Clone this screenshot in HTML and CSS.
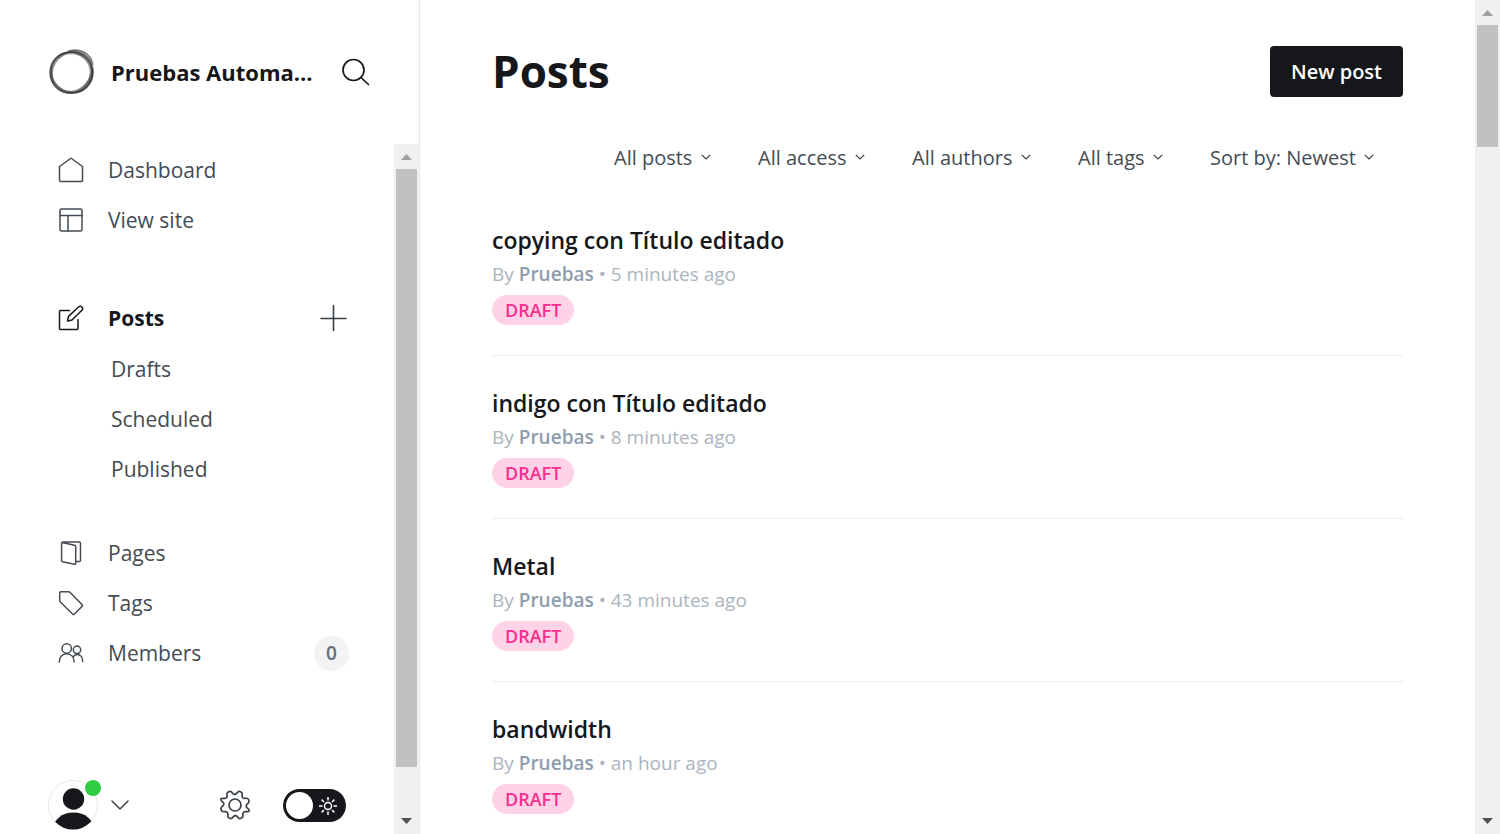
FILE: index.html
```html
<!DOCTYPE html>
<html lang="en">
<head>
<meta charset="utf-8">
<title>Posts</title>
<link rel="stylesheet" href="styles.css">
</head>
<body>
<div class="app">
  <aside class="sidebar">
    <header class="site">
      <svg class="site-logo" viewBox="0 0 48 48" fill="none" stroke="#222" aria-hidden="true">
        <ellipse cx="23" cy="24.500" rx="20" ry="19.800" stroke-width="3" opacity=".35"/>
        <ellipse cx="24" cy="23.700" rx="21.800" ry="18.800" stroke-width="2.500" opacity=".35" transform="rotate(-48 24 24)"/>
        <ellipse cx="24" cy="24.500" rx="21" ry="19.500" stroke-width="1.500" opacity=".5" transform="rotate(35 24 24)"/>
        <ellipse cx="23.500" cy="24.500" rx="21.500" ry="20.800" stroke-width="1.500" opacity=".6"/>
        <path d="M20 3C30-.500 44 4 45 17c-4-8-13-12-25-14z" fill="#222" stroke="none" opacity=".3"/>
        <path d="M45 18c3 12-5 25-19 27 9-4 15-11 17-20z" fill="#222" stroke="none" opacity=".4"/>
        <path d="M20 3C30-.500 44 4 45 17" opacity=".6"/>
      </svg>
      <span class="site-name">Pruebas Automa...</span>
      <button class="icon-button" aria-label="Search">
        <svg class="icon-search" viewBox="0 0 28 28" fill="none" stroke="#15171a" stroke-width="1.700" stroke-linecap="round"><circle cx="11.500" cy="12" r="10.500"/><path d="M19 19.500l7.500 7"/></svg>
      </button>
    </header>
    <div class="sidebar-body">
      <div class="sidebar-column">
        <nav class="menu" aria-label="Main">
          <ul class="menu-group">
            <li class="menu-row"><a class="menu-link" href="#dashboard">
              <svg class="icon" viewBox="0 0 26 26"><path d="M1.500 9.500v14a1 1 0 0 0 1 1h21a1 1 0 0 0 1-1v-14L13.500 1.500a.8.8 0 0 0-1 0z"/></svg>Dashboard</a></li>
            <li class="menu-row"><a class="menu-link" href="#site">
              <svg class="icon" viewBox="0 0 26 26"><rect x="2" y="2" width="22" height="22" rx="1.500"/><path d="M2 8.500h22M10 8.500V24"/></svg>View site</a></li>
          </ul>
          <ul class="menu-group">
            <li class="menu-row"><a class="menu-link current" href="#posts" aria-current="page">
              <svg class="icon" viewBox="0 0 26 26"><path d="M11.500 5.500h-9a1 1 0 0 0-1 1v17a1 1 0 0 0 1 1h16.500a1 1 0 0 0 1-1v-9"/><path d="M9.500 16l1-4.600L20.500 2a2.300 2.300 0 0 1 3.400 3.300L14 15z"/></svg>Posts</a>
              <button class="icon-button add" aria-label="New post">
                <svg class="icon-plus" viewBox="0 0 28 28" fill="none" stroke="#394047" stroke-width="1.600" stroke-linecap="round"><path d="M14.500 1.500v25M2 14.500h25"/></svg>
              </button></li>
            <li>
              <ul class="submenu">
                <li class="menu-row"><a class="menu-link" href="#drafts">Drafts</a></li>
                <li class="menu-row"><a class="menu-link" href="#scheduled">Scheduled</a></li>
                <li class="menu-row"><a class="menu-link" href="#published">Published</a></li>
              </ul>
            </li>
          </ul>
          <ul class="menu-group">
            <li class="menu-row"><a class="menu-link" href="#pages">
              <svg class="icon" viewBox="0 0 26 26"><path d="M4 2.500l12.500 2.800a1.500 1.500 0 0 1 1.200 1.500v16.500a1 1 0 0 1-1.300 1L4.600 21.800a1.300 1.300 0 0 1-1-1.300V3.300a1.300 1.300 0 0 1 1.300-1.300h16.300a1.300 1.300 0 0 1 1.300 1.300v17a1.300 1.300 0 0 1-1.300 1.300h-3.500"/></svg>Pages</a></li>
            <li class="menu-row"><a class="menu-link" href="#tags">
              <svg class="icon" viewBox="0 0 26 26"><path d="M2.800 1.700h7.700a2 2 0 0 1 1.400.6l12.300 12.500a1 1 0 0 1 0 1.400l-8 8a1 1 0 0 1-1.400 0L2.300 12a2 2 0 0 1-.6-1.400V2.700a1 1 0 0 1 1.100-1z"/></svg>Tags</a></li>
            <li class="menu-row"><a class="menu-link" href="#members">
              <svg class="icon" viewBox="0 0 26 26"><circle cx="8.700" cy="8.500" r="4.700"/><circle cx="19" cy="9.800" r="3.700"/><path d="M1.300 22c0-5 3-8.300 7.400-8.300s7.400 3.300 7.400 8.300M15.500 16.400c1-1.200 2.300-1.800 3.700-1.800 3.300 0 5.500 2.800 5.500 7"/></svg>Members</a>
              <span class="count">0</span></li>
          </ul>
        </nav>
        <footer class="account">
          <button class="account-button" aria-label="Account">
            <span class="avatar">
              <svg class="avatar-image" viewBox="0 0 50 50"><defs><clipPath id="disc"><circle cx="25" cy="25" r="24.500"/></clipPath></defs><circle cx="25" cy="25" r="24.500" fill="#fff" stroke="#e5e7ea"/><g fill="#15171a" clip-path="url(#disc)"><circle cx="25.500" cy="19" r="10.700"/><ellipse cx="25.500" cy="50" rx="21" ry="17.500"/></g></svg>
              <span class="presence"></span>
            </span>
            <svg class="icon-chevron" viewBox="0 0 18 10" fill="none" stroke="#394047" stroke-width="1.500" stroke-linecap="round" stroke-linejoin="round"><path d="M1 1l8 8 8-8"/></svg>
          </button>
          <a class="settings" href="#settings" aria-label="Settings">
            <svg class="icon-gear" viewBox="0 0 32 32" fill="none" stroke="#394047" stroke-width="1.700" stroke-linejoin="round"><circle cx="16" cy="16" r="6"/><path transform="rotate(22.500 16 16)" d="M13.500 3.200c.6-2 4.400-2 5 0l.5 1.500c.5 1.600 2.100 2.200 3.500 1.500l1.500-.8c1.900-.9 4.500 1.700 3.600 3.600l-.8 1.500c-.7 1.400-.1 3 1.500 3.500l1.500.5c2 .6 2 2.400 0 3l-1.500.5c-1.600.5-2.200 2.100-1.500 3.500l.8 1.500c.9 1.900-1.700 4.500-3.600 3.600l-1.500-.8c-1.400-.7-3-.1-3.500 1.500l-.5 1.500c-.6 2-4.400 2-5 0l-.5-1.500c-.5-1.600-2.100-2.200-3.500-1.500l-1.500.8c-1.900.9-4.500-1.700-3.600-3.600l.8-1.500c.7-1.400.1-3-1.500-3.500l-1.500-.5c-2-.6-2-2.400 0-3l1.500-.5c1.600-.5 2.200-2.100 1.500-3.500l-.8-1.500c-.9-1.900 1.700-4.500 3.600-3.600l1.500.8c1.400.7 3 .1 3.500-1.500z"/></svg>
          </a>
          <label class="theme">
            <input class="theme-input" type="checkbox" role="switch" aria-label="Night mode">
            <svg class="theme-sun" viewBox="0 0 18 18" fill="none" stroke="#fff" stroke-width="1.500"><circle cx="9" cy="9" r="3.500"/><path d="M9 0v3.500M9 14.500V18M0 9h3.500M14.500 9H18M2.600 2.600L5 5M13 13l2.400 2.400M2.600 15.400L5 13M13 5l2.400-2.400"/></svg>
          </label>
        </footer>
      </div>
      <div class="scrollbar" aria-hidden="true">
        <svg class="scroll-arrow" viewBox="0 0 25 25"><path d="M7 16l5.500-6 5.500 6z" fill="#a0a0a0"/></svg>
        <div class="scroll-track"><div class="scroll-thumb sidebar-thumb"></div></div>
        <svg class="scroll-arrow" viewBox="0 0 25 25"><path d="M7 9l5.500 6L18 9z" fill="#505050"/></svg>
      </div>
    </div>
  </aside>
  <main class="content">
    <header class="content-header">
      <h1 class="page-title">Posts</h1>
      <button class="new-post">New post</button>
    </header>
    <div class="filters">
      <label class="filter"><select class="filter-select" aria-label="Type"><option>All posts</option></select><svg class="filter-chevron" viewBox="0 0 10 6"><path d="M.8.8L5 5 9.200.8"/></svg></label>
      <label class="filter"><select class="filter-select" aria-label="Access"><option>All access</option></select><svg class="filter-chevron" viewBox="0 0 10 6"><path d="M.8.8L5 5 9.200.8"/></svg></label>
      <label class="filter"><select class="filter-select" aria-label="Author"><option>All authors</option></select><svg class="filter-chevron" viewBox="0 0 10 6"><path d="M.8.8L5 5 9.200.8"/></svg></label>
      <label class="filter"><select class="filter-select" aria-label="Tag"><option>All tags</option></select><svg class="filter-chevron" viewBox="0 0 10 6"><path d="M.8.8L5 5 9.200.8"/></svg></label>
      <label class="filter"><select class="filter-select" aria-label="Order"><option>Sort by: Newest</option></select><svg class="filter-chevron" viewBox="0 0 10 6"><path d="M.8.8L5 5 9.200.8"/></svg></label>
    </div>
    <ol class="posts">
      <li class="post"><h2 class="post-title"><a href="#post-1">copying con Título editado</a></h2><p class="post-meta">By <b>Pruebas</b> • 5 minutes ago</p><span class="status">DRAFT</span></li>
      <li class="post"><h2 class="post-title"><a href="#post-2">indigo con Título editado</a></h2><p class="post-meta">By <b>Pruebas</b> • 8 minutes ago</p><span class="status">DRAFT</span></li>
      <li class="post"><h2 class="post-title"><a href="#post-3">Metal</a></h2><p class="post-meta">By <b>Pruebas</b> • 43 minutes ago</p><span class="status">DRAFT</span></li>
      <li class="post"><h2 class="post-title"><a href="#post-4">bandwidth</a></h2><p class="post-meta">By <b>Pruebas</b> • an hour ago</p><span class="status">DRAFT</span></li>
    </ol>
  </main>
  <div class="scrollbar" aria-hidden="true">
    <svg class="scroll-arrow" viewBox="0 0 25 25"><path d="M7 16l5.500-6 5.500 6z" fill="#a0a0a0"/></svg>
    <div class="scroll-track"><div class="scroll-thumb page-thumb"></div></div>
    <svg class="scroll-arrow" viewBox="0 0 25 25"><path d="M7 9l5.500 6L18 9z" fill="#505050"/></svg>
  </div>
</div>
</body>
</html>
```
FILE: styles.css
```css
* { box-sizing: border-box; }

body {
  margin: 0;
  background: #fff;
  color: #15171a;
  font-family: "Segoe UI", "Open Sans", "Noto Sans", sans-serif;
  font-size: 21px;
}

ul, ol, h1, h2, p { margin: 0; padding: 0; }
ul, ol { list-style: none; }
a { color: inherit; text-decoration: none; }
button, select { font: inherit; color: inherit; border: 0; background: none; padding: 0; cursor: pointer; }
svg { display: block; flex: none; }

.app { display: flex; height: 100vh; overflow: hidden; }

.sidebar {
  display: flex;
  flex-direction: column;
  flex: none;
  width: 420px;
  border-right: 1px solid #e5e7ea;
}

.site {
  display: flex;
  align-items: center;
  height: 144px;
  padding: 0 49px 0 48px;
}
.site-logo { width: 48px; height: 48px; }
.site-name {
  flex: 1;
  margin-left: 15px;
  white-space: nowrap;
  font-size: 22px;
  font-weight: 700;
}
.icon-button { display: flex; }
.icon-search { width: 28px; height: 28px; }

.sidebar-body { display: flex; flex: 1; min-height: 0; }
.sidebar-column {
  display: flex;
  flex-direction: column;
  justify-content: space-between;
  flex: 1;
  overflow: hidden;
}

.menu { padding: 1px 45px 0 58px; color: #444b53; }
.menu-group + .menu-group { margin-top: 48px; }
.menu-group:last-child { margin-top: 34px; }
.menu-row { display: flex; align-items: center; height: 50px; }
.menu-link { display: flex; align-items: center; gap: 24px; flex: 1; }
.current { color: #15171a; font-weight: 700; }
.submenu { padding: 1px 0 0 53px; }
.icon {
  width: 26px;
  height: 26px;
  fill: none;
  stroke: currentColor;
  stroke-width: 1.500;
  stroke-linecap: round;
  stroke-linejoin: round;
}
.add { padding-right: 2px; }
.icon-plus { width: 28px; height: 28px; }
.count {
  width: 35px;
  height: 35px;
  border-radius: 50%;
  background: #f1f3f4;
  color: #626d79;
  font-size: 19px;
  font-weight: 600;
  line-height: 35px;
  text-align: center;
}

.account {
  display: flex;
  align-items: center;
  padding: 0 48px 4px;
}
.account-button { display: flex; align-items: center; gap: 13px; margin-right: auto; }
.avatar { position: relative; }
.avatar-image { width: 50px; height: 50px; }
.presence {
  position: absolute;
  top: 0;
  right: -3px;
  width: 16px;
  height: 16px;
  border-radius: 50%;
  background: #30cf43;
}
.icon-chevron { width: 18px; height: 10px; }
.settings { margin-right: 32px; }
.icon-gear { width: 32px; height: 32px; }
.theme { position: relative; display: flex; }
.theme-input {
  appearance: none;
  display: flex;
  align-items: center;
  width: 63px;
  height: 33px;
  margin: 0;
  padding: 3px;
  border-radius: 17px;
  background: #15171a;
}
.theme-input::before {
  content: "";
  width: 27px;
  height: 27px;
  border-radius: 50%;
  background: #fff;
}
.theme-sun { position: absolute; right: 9px; top: 8px; width: 18px; height: 18px; }

.scrollbar {
  display: flex;
  flex-direction: column;
  flex: none;
  width: 25px;
  background: #f0f0f0;
}
.scroll-arrow { width: 25px; height: 25px; }
.scroll-track { flex: 1; padding: 0 2px; }
.scroll-thumb { background: #c1c1c1; }
.sidebar-thumb { height: 93.500%; }
.page-thumb { height: 15.600%; }

.content { flex: 1; min-width: 0; overflow: hidden; padding: 0 72px; }
.content-header {
  display: flex;
  align-items: center;
  justify-content: space-between;
  padding-top: 45px;
}
.page-title { font-size: 44px; font-weight: 700; line-height: 52px; }
.new-post {
  height: 51px;
  padding: 0 21px;
  border-radius: 4px;
  background: #15171a;
  color: #fff;
  font-size: 20px;
  font-weight: 600;
}

.filters {
  display: flex;
  justify-content: flex-end;
  gap: 47px;
  padding: 43px 29px 19px 0;
  color: #444b53;
  font-size: 20px;
}
.filter { display: flex; align-items: center; gap: 8px; }
.filter-select { appearance: none; height: 34px; }
.filter-chevron {
  width: 10px;
  height: 6px;
  fill: none;
  stroke: #394047;
  stroke-width: 1.200;
}

.post {
  padding: 30px 0;
  border-bottom: 1px solid #eceef0;
}
.post-title { font-size: 23px; font-weight: 600; line-height: 34px; }
.post-meta { color: #abb4be; font-size: 19px; line-height: 34px; }
.post-meta b { color: #8e9cac; font-weight: 600; }
.status {
  display: block;
  width: fit-content;
  margin-top: 4px;
  padding: 0 13px;
  border-radius: 15px;
  background: #ffd3e7;
  color: #fb2d8d;
  font-size: 18px;
  font-weight: 600;
  line-height: 30px;
}
```
